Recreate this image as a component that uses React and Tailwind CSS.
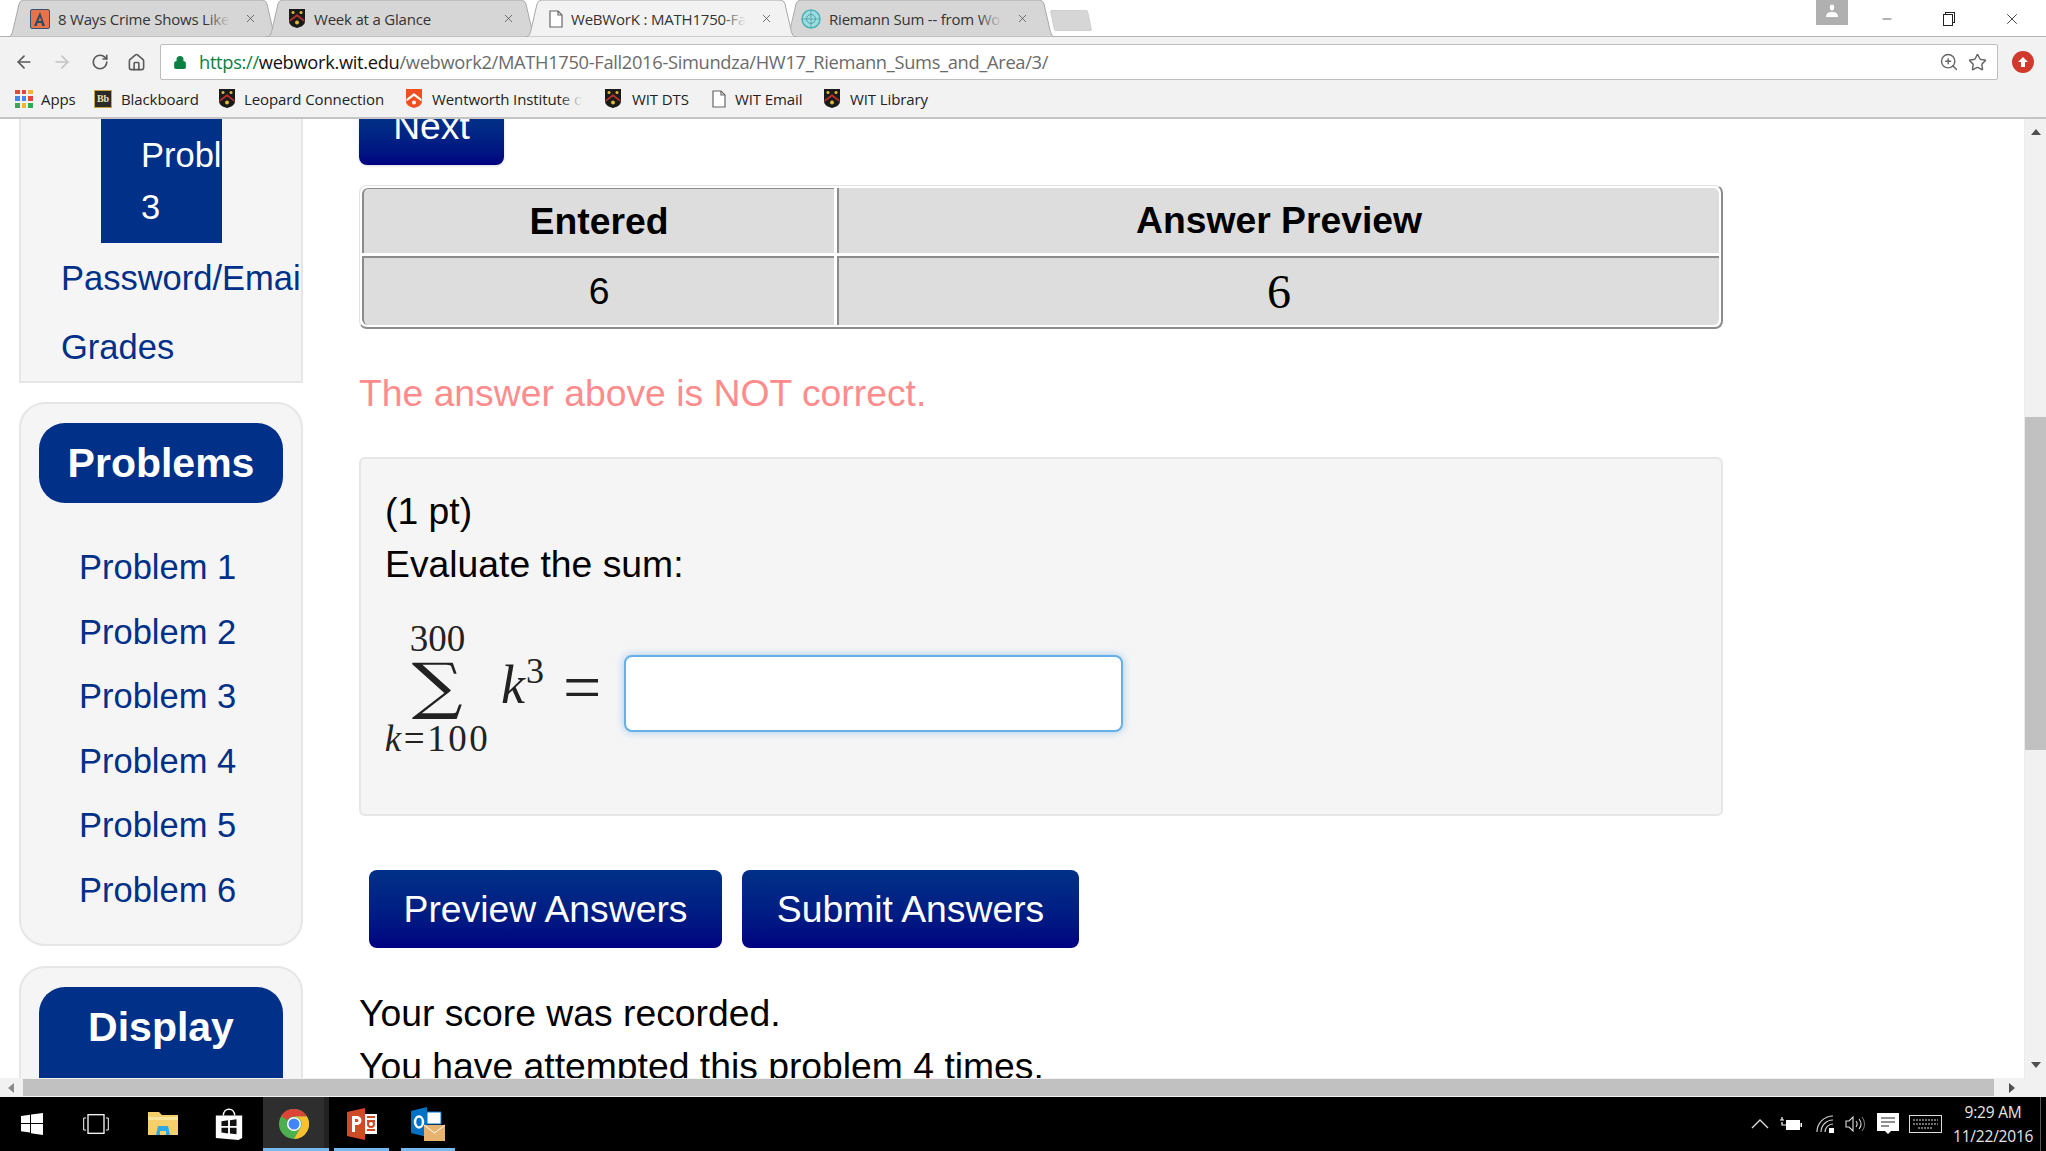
import React from 'react';
import { ArrowLeft, ArrowRight, RotateCw, Home, Lock, Star, ZoomIn, X, Minus } from 'lucide-react';

const Shield = ({ className = 'w-[18px] h-[21px]' }) => (
  <svg viewBox="0 0 18 21" className={`${className} shrink-0`}>
    <path d="M1 1h16v12c0 4-4 6-8 7-4-1-8-3-8-7z" fill="#1a1a1a" />
    <path d="M1.5 12L9 6l7.500 6v2L9 8.500 1.500 14z" fill="#b5312a" />
    <circle cx="5" cy="4.500" r="1.500" fill="#e0b93a" />
    <circle cx="13" cy="4.500" r="1.500" fill="#e0b93a" />
    <circle cx="9" cy="14.500" r="2" fill="#e0b93a" />
  </svg>
);

const RedShield = () => (
  <svg viewBox="0 0 18 21" className="w-[18px] h-[21px] shrink-0">
    <path d="M1 1h16v12c0 4-4 6-8 7-4-1-8-3-8-7z" fill="#f04e23" />
    <path d="M1.500 11L9 5l7.500 6v2.500L9 8 1.500 13.500z" fill="#fff" />
    <circle cx="9" cy="14.500" r="2" fill="#fff" />
  </svg>
);

const PageIcon = ({ className = 'w-[14px] h-[18px]' }) => (
  <svg viewBox="0 0 14 18" className={`${className} shrink-0`} fill="#fff" stroke="#666" strokeWidth="1.200">
    <path d="M1 1h8l4 4v12H1z" />
    <path d="M9 1v4h4" fill="none" />
  </svg>
);

const AFavicon = () => (
  <svg viewBox="0 0 20 20" className="w-[20px] h-[20px] shrink-0">
    <rect x="0.500" y="0.500" width="19" height="19" rx="1.500" fill="#e8734a" stroke="#35536f" />
    <path d="M10 3l5 14h-2.800l-.8-3H7.600l-.8 3H4zM10 8l-1.500 4h3z" fill="#2b4a68" />
  </svg>
);

const WolframIcon = () => (
  <svg viewBox="0 0 20 20" className="w-[20px] h-[20px] shrink-0">
    <circle cx="10" cy="10" r="9" fill="#9fdcdc" stroke="#4ab3bb" strokeWidth="1.500" />
    <circle cx="10" cy="10" r="4.500" fill="none" stroke="#4f9fb0" />
    <path d="M1 10h18M10 1v18" stroke="#4f9fb0" strokeWidth="0.800" />
  </svg>
);

const tabs = [
  { title: '8 Ways Crime Shows Like It', icon: <AFavicon />, pad: 'pl-[23px] pr-[22px]', fade: true },
  { title: 'Week at a Glance', icon: <Shield />, pad: 'pl-[22px] pr-[23px]', fade: false },
  { title: 'WeBWorK : MATH1750-Fall', icon: <PageIcon />, pad: 'pl-[24px] pr-[24px]', fade: true, active: true },
  { title: 'Riemann Sum -- from Wolfram', icon: <WolframIcon />, pad: 'pl-[17px] pr-[27px]', fade: true },
];

function Tab({ tab }) {
  const fill = tab.active ? '#f2f2f2' : '#d6d6d6';
  const fadeClass = tab.active ? 'from-[#f2f2f2]' : 'from-[#d6d6d6]';
  return (
    <div className={`relative h-[37px] w-[272px] shrink-0 -mr-[13px] flex items-center ${tab.pad} ${tab.active ? 'z-10' : ''}`}>
      <svg className="absolute inset-0 w-full h-full" viewBox="0 0 272 37" preserveAspectRatio="none">
        <path d="M0 37 C4 37 5 34 6 30 L12 4 C13 1 15 0 18 0 L254 0 C257 0 259 1 260 4 L266 30 C267 34 268 37 272 37 Z" fill={fill} stroke="#a9a9a9" strokeWidth="1" vectorEffect="non-scaling-stroke" />
      </svg>
      <div className="relative flex items-center gap-[8px] w-full min-w-0">
        {tab.icon}
        <div className="relative flex-1 min-w-0 overflow-hidden whitespace-nowrap text-[15px] leading-[20px] text-[#333] font-['Open_Sans',sans-serif] tracking-[-0.2px]">
          {tab.title}
          {tab.fade && <div className={`absolute right-0 top-0 bottom-0 w-[24px] bg-gradient-to-l ${fadeClass} to-transparent`} />}
        </div>
        <X className="w-[13px] h-[13px] shrink-0 text-[#555] ml-[6px]" strokeWidth={1.500} />
      </div>
    </div>
  );
}

function TabStrip() {
  return (
    <div className="h-[37px] bg-white flex relative shrink-0">
      <div className="absolute left-0 right-0 bottom-0 h-px bg-[#b5b5b5]" />
      <div className="flex pl-[7px] relative">
        {tabs.map((t) => <Tab key={t.title} tab={t} />)}
        <div className="w-[38px] h-[21px] mt-[10px] ml-[9px] bg-[#d6d6d6] skew-x-[12deg] rounded-[2px] border border-[#cfcfcf]" />
      </div>
      <div className="flex-1" />
      <div className="w-[32px] h-[25px] bg-[#b0b0b0] flex items-start justify-center pt-[4px] mr-[8px]">
        <svg viewBox="0 0 14 14" className="w-[14px] h-[14px]" fill="#fff">
          <ellipse cx="7" cy="3.500" rx="2.200" ry="3" />
          <path d="M1 13c0-4 3-5 6-5s6 1 6 5z" />
        </svg>
      </div>
      <div className="w-[62px] flex items-center justify-center">
        <Minus className="w-[14px] h-[14px] text-[#222]" strokeWidth={1.200} />
      </div>
      <div className="w-[62px] flex items-center justify-center">
        <svg viewBox="0 0 14 14" className="w-[14px] h-[14px]" fill="#fff" stroke="#222">
          <rect x="3.500" y="0.500" width="9" height="10" />
          <rect x="1.500" y="2.500" width="9" height="11" />
        </svg>
      </div>
      <div className="w-[64px] flex items-center justify-center mr-[2px]">
        <X className="w-[18px] h-[18px] text-[#222]" strokeWidth={1.100} />
      </div>
    </div>
  );
}

function Toolbar() {
  return (
    <div className="h-[43px] bg-[#f2f2f2] flex items-center pt-[7px] shrink-0">
      <ArrowLeft className="w-[20px] h-[20px] ml-[14px] text-[#5a5a5a]" strokeWidth={2} />
      <ArrowRight className="w-[20px] h-[20px] ml-[18px] text-[#c4c4c4]" strokeWidth={2} />
      <RotateCw className="w-[18px] h-[18px] ml-[19px] text-[#5a5a5a]" strokeWidth={2.200} />
      <Home className="w-[19px] h-[19px] ml-[18px] text-[#5a5a5a]" strokeWidth={2} />
      <div className="w-[1838px] h-[36px] ml-[14px] bg-white border border-[#bdbdbd] rounded-[2px] flex items-center pl-[12px] pr-[10px]">
        <Lock className="w-[14px] h-[15px] text-[#0b8043]" fill="#0b8043" strokeWidth={2} />
        <div className="ml-[12px] text-[18.300px] leading-[24px] font-['Open_Sans',sans-serif] tracking-[-0.320px] whitespace-nowrap">
          <span className="text-[#0b8043]">https://</span>
          <span className="text-[#111]">webwork.wit.edu</span>
          <span className="text-[#6b6b6b]">/webwork2/MATH1750-Fall2016-Simundza/HW17_Riemann_Sums_and_Area/3/</span>
        </div>
        <div className="flex-1" />
        <ZoomIn className="w-[20px] h-[20px] text-[#666]" strokeWidth={1.700} />
        <Star className="w-[19px] h-[19px] ml-[9px] text-[#666]" strokeWidth={1.800} />
      </div>
      <div className="w-[22px] h-[22px] ml-[14px] rounded-full bg-[#d0392b] flex items-center justify-center">
        <svg viewBox="0 0 12 12" className="w-[12px] h-[12px]" fill="#fff"><path d="M6 1l5 5H8v5H4V6H1z" /></svg>
      </div>
    </div>
  );
}

const appColors = ['bg-[#e0493a]', 'bg-[#e0493a]', 'bg-[#f1b433]', 'bg-[#4285f4]', 'bg-[#4285f4]', 'bg-[#e0493a]', 'bg-[#34a853]', 'bg-[#f1b433]', 'bg-[#34a853]'];

const BookmarkLabel = ({ children, className = '' }) => (
  <span className={`text-[15px] leading-[20px] text-[#222] font-['Open_Sans',sans-serif] tracking-[-0.100px] whitespace-nowrap ${className}`}>{children}</span>
);

function Bookmarks() {
  return (
    <div className="h-[39px] bg-[#f2f2f2] border-b-2 border-[#c4c4c4] flex items-center pl-[15px] shrink-0">
      <div className="grid grid-cols-3 gap-[2px] w-[18px] h-[18px]">
        {appColors.map((c, i) => <div key={i} className={c} />)}
      </div>
      <BookmarkLabel className="ml-[8px] w-[53px]">Apps</BookmarkLabel>
      <div className="w-[18px] h-[18px] bg-[#2a2a2a] border border-[#c9a33d] text-[#f0e2b0] text-[10px] leading-[16px] text-center font-['Liberation_Serif',serif] font-bold">Bb</div>
      <BookmarkLabel className="ml-[9px] w-[97px]">Blackboard</BookmarkLabel>
      <Shield />
      <BookmarkLabel className="ml-[8px] w-[161px]">Leopard Connection</BookmarkLabel>
      <RedShield />
      <div className="relative ml-[9px] w-[150px] overflow-hidden">
        <BookmarkLabel>Wentworth Institute of Technology</BookmarkLabel>
        <div className="absolute right-0 top-0 bottom-0 w-[22px] bg-gradient-to-l from-[#f2f2f2] to-transparent" />
      </div>
      <div className="w-[22px]" />
      <Shield />
      <BookmarkLabel className="ml-[10px] w-[80px]">WIT DTS</BookmarkLabel>
      <PageIcon />
      <BookmarkLabel className="ml-[9px] w-[88px]">WIT Email</BookmarkLabel>
      <Shield />
      <BookmarkLabel className="ml-[9px]">WIT Library</BookmarkLabel>
    </div>
  );
}

function Sidebar() {
  const problems = ['Problem 1', 'Problem 2', 'Problem 3', 'Problem 4', 'Problem 5', 'Problem 6'];
  return (
    <div className="w-[284px] ml-[19px] shrink-0 font-['Liberation_Sans',sans-serif]">
      <div className="h-[264px] bg-[#f5f5f5] border-x-2 border-b-2 border-[#e6e6e6] overflow-hidden">
        <div className="w-[121px] h-[124px] ml-[80px] bg-[#003087] text-white text-[34.500px] leading-[52px] pt-[10px] pl-[40px] overflow-hidden whitespace-nowrap">
          Probl<br />3
        </div>
        <div className="pl-[40px] pt-px text-[#003087] text-[34.500px] leading-[69px] whitespace-nowrap">
          <div className="h-[69px]">Password/Email</div>
          <div className="h-[69px]">Grades</div>
        </div>
      </div>
      <div className="mt-[19px] h-[544px] bg-[#f5f5f5] border-2 border-[#e6e6e6] rounded-[26px] pt-[19px] px-[18px]">
        <div className="h-[80px] pt-px bg-[#003087] rounded-[26px] text-white text-[41px] font-bold flex items-center justify-center">Problems</div>
        <div className="mt-[32px] pl-[40px] text-[#003087] text-[34.500px] leading-[64.500px]">
          {problems.map((p) => <div key={p}>{p}</div>)}
        </div>
      </div>
      <div className="mt-[20px] h-[200px] bg-[#f5f5f5] border-2 border-[#e6e6e6] rounded-[26px] pt-[19px] px-[18px]">
        <div className="h-[140px] bg-[#003087] rounded-[26px] text-white text-[41px] font-bold text-center leading-[80px]">Display</div>
      </div>
    </div>
  );
}

const cellBase = 'bg-[#dddddd] flex items-center justify-center text-black';

function AnswerTable() {
  return (
    <div className="mt-[20px] h-[144px] border border-[#e2e2e2] border-b-2 border-r-2 border-b-[#8c8c8c] border-r-[#8c8c8c] rounded-[8px] p-[2px] grid grid-cols-[472px_1fr] grid-rows-[65px_1fr] gap-[3px] text-[37.300px]">
      <div className={`${cellBase} font-bold border-l-2 border-t border-[#8c8c8c] rounded-tl-[6px]`}>Entered</div>
      <div className={`${cellBase} font-bold border-l-2 border-[#8c8c8c] rounded-tr-[6px]`}>Answer Preview</div>
      <div className={`${cellBase} border-l-2 border-t-2 border-[#8c8c8c] rounded-bl-[6px]`}>6</div>
      <div className={`${cellBase} border-l-2 border-t-2 border-[#8c8c8c] rounded-br-[6px] font-['Liberation_Serif',serif] text-[48px] text-[#333]`}>6</div>
    </div>
  );
}

function MathSum() {
  return (
    <div className="mt-[30px] flex items-start font-['Liberation_Serif',serif] text-[#222]">
      <div className="w-[105px] flex flex-col items-center">
        <div className="text-[37px] leading-[36px]">300</div>
        <div className="text-[62px] leading-[58px] h-[64px] scale-x-[1.150] font-['DejaVu_Serif',serif]">∑</div>
        <div className="text-[37px] leading-[36px] whitespace-nowrap tracking-[2.500px]"><i>k</i>=100</div>
      </div>
      <div className="w-[62px] ml-[11px] mt-[34px] text-[54px] leading-[60px] whitespace-nowrap">
        <i>k</i><sup className="text-[36px] -top-[20px] ml-[1px]">3</sup>
      </div>
      <div className="w-[61px] mt-[36px] text-[68px] leading-[60px]">=</div>
      <div className="mt-[34px] w-[499px] h-[77px] bg-white border-2 border-[#66afe9] rounded-[8px] shadow-[0_0_8px_rgba(102,175,233,0.6)]" />
    </div>
  );
}

function MainColumn() {
  return (
    <div className="ml-[56px] w-[1364px] shrink-0 font-['Liberation_Sans',sans-serif] text-[37.300px] leading-[53px] text-black">
      <div className="w-[145px] h-[46px] rounded-b-[8px] bg-gradient-to-b from-[#003087] to-[#000080] text-white text-center overflow-hidden shadow-[0_1px_3px_rgba(0,0,0,0.15)]">
        <div className="-mt-[19px] leading-[53px]">Next</div>
      </div>
      <AnswerTable />
      <div className="mt-[38px] text-[#ff8c8c]">The answer above is NOT correct.</div>
      <div className="mt-[37px] h-[359px] bg-[#f5f5f5] border-2 border-[#e6e6e6] rounded-[6px] pt-[26px] pl-[24px]">
        <div>(1 pt)</div>
        <div>Evaluate the sum:</div>
        <MathSum />
      </div>
      <div className="mt-[54px] ml-[10px] flex gap-[20px]">
        <div className="w-[353px] h-[78px] rounded-[8px] bg-gradient-to-b from-[#003087] to-[#000080] text-white flex items-center justify-center">Preview Answers</div>
        <div className="w-[337px] h-[78px] rounded-[8px] bg-gradient-to-b from-[#003087] to-[#000080] text-white flex items-center justify-center">Submit Answers</div>
      </div>
      <div className="mt-[39px]">Your score was recorded.</div>
      <div>You have attempted this problem 4 times.</div>
    </div>
  );
}

function VScrollbar() {
  return (
    <div className="w-[22px] shrink-0 bg-[#f1f1f1] flex flex-col items-center border-l border-[#ececec]">
      <svg viewBox="0 0 10 6" className="w-[10px] h-[6px] mt-[10px] shrink-0" fill="#505050"><path d="M5 0l5 6H0z" /></svg>
      <div className="w-full h-[333px] mt-[282px] bg-[#c1c1c1]" />
      <div className="flex-1" />
      <svg viewBox="0 0 10 6" className="w-[10px] h-[6px] mb-[10px] shrink-0" fill="#505050"><path d="M5 6L0 0h10z" /></svg>
    </div>
  );
}

function HScrollbar() {
  return (
    <div className="h-[19px] bg-[#f1f1f1] flex items-center shrink-0">
      <svg viewBox="0 0 6 10" className="w-[6px] h-[10px] ml-[8px] shrink-0" fill="#8a8a8a"><path d="M0 5l6-5v10z" /></svg>
      <div className="w-[1971px] h-[17px] ml-[9px] bg-[#c1c1c1]" />
      <svg viewBox="0 0 6 10" className="w-[6px] h-[10px] ml-[15px] shrink-0" fill="#505050"><path d="M6 5L0 0v10z" /></svg>
    </div>
  );
}

function WinLogo() {
  return (
    <svg viewBox="0 0 22 22" className="w-[22px] h-[22px]" fill="#fff">
      <path d="M0 3l9-1.300V10H0zM10 1.500L22 0v10H10zM0 11h9v8.500L0 18.300zM10 11h12v11l-12-1.700z" />
    </svg>
  );
}

function Taskbar() {
  return (
    <div className="h-[54px] bg-black flex items-center shrink-0 relative">
      <div className="ml-[21px] w-[22px] flex"><WinLogo /></div>
      <svg viewBox="0 0 26 20" className="w-[26px] h-[20px] ml-[40px]" fill="none" stroke="#fff" strokeWidth="1.300">
        <rect x="5" y="0.700" width="16" height="18.600" />
        <path d="M3 4H0.700v12H3M23 4h2.300v12H23" strokeWidth="1" />
      </svg>
      <svg viewBox="0 0 30 28" className="w-[30px] h-[28px] ml-[39px]">
        <path d="M0 2h11l3 3h16v20H0z" fill="#f4cf6b" />
        <path d="M0 7h30v3H0z" fill="#fbe59b" />
        <path d="M8 25l2-9h10l2 9h-4v-4h-6v4z" fill="#2fa9e0" />
      </svg>
      <svg viewBox="0 0 28 34" className="w-[28px] h-[32px] ml-[37px]">
        <path d="M0 8h28v24L24 34 0 32z" fill="#fff" />
        <path d="M8 8c0-9 12-9 12 0" fill="none" stroke="#fff" strokeWidth="1.500" />
        <path d="M6 14l7-1v6H6zM15 13l7-1v7h-7zM6 21h7v6l-7-1zM15 21h7v7l-7-1z" fill="#111" />
      </svg>
      <div className="ml-[20px] w-[61px] h-[54px] bg-[#2e2e2e] flex items-center justify-center relative">
        <svg viewBox="0 0 30 30" className="w-[30px] h-[30px]">
          <circle cx="15" cy="15" r="15" fill="#4caf50" />
          <path d="M15 0a15 15 0 0 1 13 7.500H15a7.500 7.500 0 0 0-6.500 3.750L2 7a15 15 0 0 1 13-7z" fill="#db4437" />
          <path d="M28 7.500A15 15 0 0 1 15 30l6.500-11.250A7.500 7.500 0 0 0 15 7.500z" fill="#fbc02d" />
          <circle cx="15" cy="15" r="7" fill="#fff" />
          <circle cx="15" cy="15" r="5.500" fill="#4285f4" />
        </svg>
        <div className="absolute left-0 right-0 bottom-0 h-[3px] bg-[#76b9ed]" />
      </div>
      <div className="w-[5px] h-[54px] bg-[#222] relative">
        <div className="absolute left-0 right-0 bottom-0 h-[3px] bg-[#76b9ed]" />
      </div>
      <div className="ml-[5px] w-[55px] h-[54px] flex items-center justify-center relative">
        <svg viewBox="0 0 30 32" className="w-[30px] h-[32px]">
          <path d="M18 6h12v20H18z" fill="#fff" />
          <path d="M0 4l18-4v32L0 28z" fill="#d04a26" />
          <path d="M20 9h8M20 13h8M20 22h8" stroke="#d04a26" strokeWidth="2" />
          <circle cx="24" cy="16" r="3" fill="none" stroke="#d04a26" strokeWidth="2" />
          <path d="M5 8h5a4 4 0 0 1 0 9H8v7H5zM8 11v3h2a1.500 1.500 0 0 0 0-3z" fill="#fff" />
        </svg>
        <div className="absolute left-0 right-0 bottom-0 h-[3px] bg-[#76b9ed]" />
      </div>
      <div className="ml-[12px] w-[54px] h-[54px] flex items-center justify-center relative">
        <svg viewBox="0 0 34 34" className="w-[34px] h-[34px]">
          <path d="M16 5h14v12H16z" fill="#fff" stroke="#0072c6" />
          <path d="M0 4l16-4v30L0 26z" fill="#0072c6" />
          <ellipse cx="8" cy="15" rx="4" ry="5.500" fill="none" stroke="#fff" strokeWidth="2.500" />
          <path d="M13 18h21v16H13z" fill="#e8b36f" />
          <path d="M13 18l10.500 8L34 18" fill="none" stroke="#fff" strokeWidth="1" />
        </svg>
        <div className="absolute left-0 right-0 bottom-0 h-[3px] bg-[#76b9ed]" />
      </div>
      <div className="flex-1" />
      <svg viewBox="0 0 18 10" className="w-[18px] h-[10px]" fill="none" stroke="#ddd" strokeWidth="1.300"><path d="M1 9l8-8 8 8" /></svg>
      <svg viewBox="0 0 22 14" className="w-[22px] h-[14px] ml-[11px]">
        <path d="M0 3h4M2 0v3M2 5v3h4" fill="none" stroke="#fff" strokeWidth="1.200" />
        <rect x="6" y="3" width="14" height="10" fill="#fff" />
        <rect x="20.500" y="6" width="1.500" height="4" fill="#fff" />
      </svg>
      <svg viewBox="0 0 18 18" className="w-[18px] h-[18px] ml-[14px]" fill="none" stroke="#ccc" strokeWidth="1.200">
        <path d="M1 17A16 16 0 0 1 17 1M5 17A12 12 0 0 1 17 5M9 17a8 8 0 0 1 8-8" />
        <rect x="13" y="13" width="5" height="5" fill="#fff" stroke="none" />
      </svg>
      <svg viewBox="0 0 22 16" className="w-[22px] h-[16px] ml-[11px]" fill="none" stroke="#ddd" strokeWidth="1.100">
        <path d="M1 5h3l4-4v14l-4-4H1z" />
        <path d="M11 5c1.500 2 1.500 4 0 6M14 3c2.500 3 2.500 7 0 10" />
        <path d="M17 1c3.500 4 3.500 10 0 14" stroke="#777" />
      </svg>
      <svg viewBox="0 0 22 22" className="w-[22px] h-[22px] ml-[10px]">
        <path d="M0 0h22v18h-8l-3 3-3-3H0z" fill="#fff" />
        <path d="M4 5h14M4 9h14M4 13h8" stroke="#222" strokeWidth="1.200" />
      </svg>
      <svg viewBox="0 0 33 18" className="w-[33px] h-[18px] ml-[10px]" fill="none" stroke="#ddd">
        <rect x="0.500" y="0.500" width="32" height="17" />
        <path d="M4 5h25M4 9h25M9 13h15" strokeDasharray="2 1" />
      </svg>
      <div className="ml-[11px] w-[80px] text-center text-[15.500px] leading-[24px] text-[#e4e4e4] font-['Open_Sans',sans-serif] tracking-[-0.200px] whitespace-nowrap">
        <div>9:29 AM</div>
        <div>11/22/2016</div>
      </div>
      <div className="ml-[7px] w-px h-[54px] bg-[#555]" />
      <div className="w-[5px]" />
    </div>
  );
}

export default function App() {
  return (
    <div className="w-[2046px] h-[1151px] overflow-hidden flex flex-col bg-white">
      <TabStrip />
      <Toolbar />
      <Bookmarks />
      <div className="h-[959px] flex shrink-0 overflow-hidden bg-white">
        <div className="flex-1 flex overflow-hidden">
          <Sidebar />
          <MainColumn />
        </div>
        <VScrollbar />
      </div>
      <HScrollbar />
      <Taskbar />
    </div>
  );
}
